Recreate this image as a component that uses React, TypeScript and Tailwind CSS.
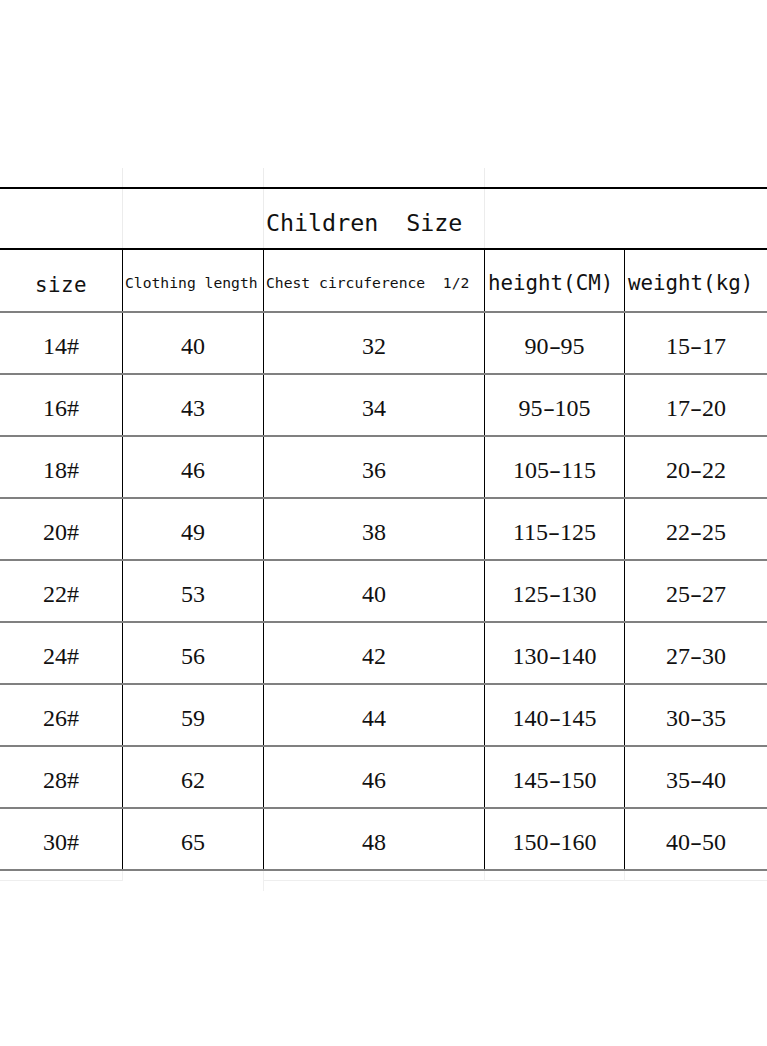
import React from "react";

const rows = [
  ["14#", "40", "32", "90-95", "15-17"],
  ["16#", "43", "34", "95-105", "17-20"],
  ["18#", "46", "36", "105-115", "20-22"],
  ["20#", "49", "38", "115-125", "22-25"],
  ["22#", "53", "40", "125-130", "25-27"],
  ["24#", "56", "42", "130-140", "27-30"],
  ["26#", "59", "44", "140-145", "30-35"],
  ["28#", "62", "46", "145-150", "35-40"],
  ["30#", "65", "48", "150-160", "40-50"],
];

const mono = "font-['DejaVu_Sans_Mono',monospace]";
const serif = "font-['Liberation_Serif','DejaVu_Serif',serif]";
const cols = "grid grid-cols-[123px_141px_221px_140px_142px]";

function Val({ v }: { v: string }) {
  const parts = v.split("-");
  if (parts.length === 1) return <>{v}</>;
  return (
    <>
      {parts[0]}
      <span className="inline-block w-[12px] text-center scale-x-150">-</span>
      {parts[1]}
    </>
  );
}

export default function App() {
  return (
    <div className="w-[767px] h-[1046px] bg-white text-[#111] overflow-hidden">
      <div className="h-[168px]" />
      {/* faint strip above */}
      <div className={`${cols} h-[19px]`}>
        <div className="border-r border-[#ececec]" />
        <div className="border-r border-[#ececec]" />
        <div className="border-r border-[#ececec]" />
        <div />
        <div />
      </div>
      {/* title row */}
      <div className={`${cols} h-[63px] border-t-2 border-b-2 border-black`}>
        <div className="border-r border-[#ececec]" />
        <div className="border-r border-[#ececec]" />
        <div className="border-r border-[#ececec] flex items-center pl-[2px] pt-[8px]">
          <span className={`${mono} text-[23.3px] whitespace-pre leading-none`}>
            Children  Size
          </span>
        </div>
        <div />
        <div />
      </div>
      {/* header row */}
      <div className={`${cols} h-[63px] border-b-2 border-[#808080]`}>
        <div className="border-r border-black flex items-center justify-center pt-[10px]">
          <span className={`${mono} text-[20.8px] leading-none tracking-[0.5px]`}>size</span>
        </div>
        <div className="border-r border-black flex items-center pl-[2px] pt-[6px]">
          <span className={`${mono} text-[14.7px] leading-none whitespace-pre`}>Clothing length</span>
        </div>
        <div className="border-r border-black flex items-center pl-[2px] pt-[6px]">
          <span className={`${mono} text-[14.7px] leading-none whitespace-pre`}>Chest circuference  1/2</span>
        </div>
        <div className="border-r border-black flex items-center pl-[3px] pt-[6px]">
          <span className={`${mono} text-[20.8px] leading-none whitespace-pre`}>height(CM)</span>
        </div>
        <div className="flex items-center pl-[3px] pt-[6px]">
          <span className={`${mono} text-[20.8px] leading-none whitespace-pre`}>weight(kg)</span>
        </div>
      </div>
      {rows.map((r, i) => (
        <div key={i} className={`${cols} h-[62px] border-b-2 border-[#808080]`}>
          {r.map((c, j) => (
            <div
              key={j}
              className={`${j < 4 ? "border-r border-black" : ""} flex items-center justify-center pt-[5px]`}
            >
              <span className={`${serif} text-[24px] leading-none`}>
                <Val v={c} />
              </span>
            </div>
          ))}
        </div>
      ))}
      {/* faint strip below */}
      <div className={`${cols} h-[20px]`}>
        <div className="border-r border-[#efefef] border-b border-b-[#eeeeee] h-[10px]" />
        <div className="border-r border-[#efefef] h-[20px]" />
        <div className="border-r border-[#efefef] border-b border-b-[#eeeeee] h-[10px]" />
        <div className="border-r border-[#efefef] border-b border-b-[#eeeeee] h-[10px]" />
        <div className="border-b border-[#eeeeee] h-[10px]" />
      </div>
    </div>
  );
}
